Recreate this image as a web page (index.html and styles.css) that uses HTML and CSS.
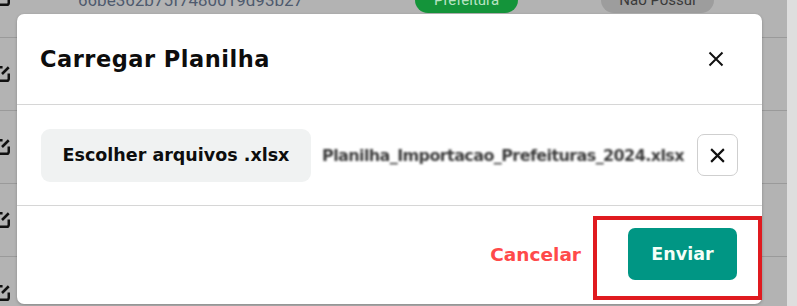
FILE: index.html
```html
<!DOCTYPE html>
<html lang="pt-BR">
<head>
<meta charset="utf-8">
<title>Carregar Planilha</title>
<link rel="stylesheet" href="styles.css">
</head>
<body>
<div class="page">
  <div class="table">
    <div class="row row-first">
      <span class="edit"><svg viewBox="0 0 16 16" width="18" height="18"><path d="M8.5 2H3.5A1.5 1.5 0 0 0 2 3.5v9A1.5 1.5 0 0 0 3.5 14h9a1.5 1.5 0 0 0 1.5-1.5V7.5" fill="none" stroke="#111" stroke-width="2.2"/><path d="M8 8l6-6" stroke="#111" stroke-width="2.2"/></svg></span>
      <span class="id">66be362b75f7480019d93b27</span>
      <span class="pill pill-green">Prefeitura</span>
      <span class="pill pill-gray">Não Possui</span>
    </div>
    <div class="row">
      <span class="edit"><svg viewBox="0 0 16 16" width="18" height="18"><path d="M8.5 2H3.5A1.5 1.5 0 0 0 2 3.5v9A1.5 1.5 0 0 0 3.5 14h9a1.5 1.5 0 0 0 1.5-1.5V7.5" fill="none" stroke="#111" stroke-width="2.2"/><path d="M8 8l6-6" stroke="#111" stroke-width="2.2"/></svg></span>
    </div>
    <div class="row">
      <span class="edit"><svg viewBox="0 0 16 16" width="18" height="18"><path d="M8.5 2H3.5A1.5 1.5 0 0 0 2 3.5v9A1.5 1.5 0 0 0 3.5 14h9a1.5 1.5 0 0 0 1.5-1.5V7.5" fill="none" stroke="#111" stroke-width="2.2"/><path d="M8 8l6-6" stroke="#111" stroke-width="2.2"/></svg></span>
    </div>
    <div class="row">
      <span class="edit"><svg viewBox="0 0 16 16" width="18" height="18"><path d="M8.5 2H3.5A1.5 1.5 0 0 0 2 3.5v9A1.5 1.5 0 0 0 3.5 14h9a1.5 1.5 0 0 0 1.5-1.5V7.5" fill="none" stroke="#111" stroke-width="2.2"/><path d="M8 8l6-6" stroke="#111" stroke-width="2.2"/></svg></span>
    </div>
    <div class="row">
      <span class="edit"><svg viewBox="0 0 16 16" width="18" height="18"><path d="M8.5 2H3.5A1.5 1.5 0 0 0 2 3.5v9A1.5 1.5 0 0 0 3.5 14h9a1.5 1.5 0 0 0 1.5-1.5V7.5" fill="none" stroke="#111" stroke-width="2.2"/><path d="M8 8l6-6" stroke="#111" stroke-width="2.2"/></svg></span>
    </div>
  </div>
  <div class="scroll-strip"></div>

  <div class="modal">
    <div class="modal-header">
      <h2 class="modal-title">Carregar Planilha</h2>
      <button class="close" aria-label="Fechar"><svg viewBox="0 0 16 16" width="16" height="16"><path d="M1.5 1.5l13 13M14.5 1.5l-13 13" stroke="#111" stroke-width="2"/></svg></button>
    </div>
    <div class="modal-body">
      <button class="choose">Escolher arquivos .xlsx</button>
      <span class="filename">Planilha_Importacao_Prefeituras_2024.xlsx</span>
      <button class="clear" aria-label="Remover"><svg viewBox="0 0 16 16" width="17" height="17"><path d="M2 2l12 12M14 2L2 14" stroke="#111" stroke-width="2"/></svg></button>
    </div>
    <div class="modal-footer">
      <button class="cancel">Cancelar</button>
      <button class="send">Enviar</button>
    </div>
  </div>
  <div class="highlight"></div>
</div>
</body>
</html>
```

FILE: styles.css
```css
* { box-sizing: border-box; }
html, body { margin: 0; padding: 0; }
body {
  width: 797px;
  height: 306px;
  overflow: hidden;
  background: #b3b3b3;
  font-family: "DejaVu Sans", "Noto Sans", sans-serif;
}
.page {
  position: relative;
  width: 797px;
  height: 306px;
  display: flex;
  overflow: hidden;
}
.table {
  width: 787px;
  height: 306px;
  display: flex;
  flex-direction: column;
  overflow: hidden;
}
.row {
  height: 73px;
  border-bottom: 1px solid #9a9a9a;
  display: flex;
  align-items: center;
  flex-shrink: 0;
}
.row-first {
  height: 38px;
  align-items: flex-end;
}
.edit {
  margin-left: -7px;
  display: flex;
  flex-shrink: 0;
}
.row-first .edit { margin-bottom: 30px; }
.id {
  flex-shrink: 0;
  width: 260px;
  font-family: Roboto, "Liberation Sans", sans-serif;
  font-size: 17px;
  color: #4e5a6e;
  margin-left: 67px;
  margin-bottom: 27px;
  line-height: 20px;
  white-space: nowrap;
}
.pill {
  flex-shrink: 0;
  font-family: Roboto, "Liberation Sans", sans-serif;
  font-size: 15px;
  line-height: 20px;
  padding: 3px 0;
  border-radius: 14px;
  margin-bottom: 24px;
  text-align: center;
}
.pill-green {
  background: #14943a;
  color: #b8e3c2;
  margin-left: 77px;
  width: 103px;
}
.pill-gray {
  background: #9d9d9d;
  color: #3a3a3a;
  margin-left: 83px;
  width: 113px;
}
.scroll-strip {
  width: 10px;
  flex-shrink: 0;
  background: #dedede;
}
.modal {
  position: absolute;
  left: 17px;
  top: 14px;
  width: 745px;
  height: 290px;
  background: #fff;
  border-radius: 7px;
  box-shadow: 0 1px 3px rgba(0,0,0,0.25);
  display: flex;
  flex-direction: column;
  overflow: hidden;
}
.modal-header {
  height: 91px;
  border-bottom: 1px solid #d6d6d6;
  display: flex;
  align-items: center;
  justify-content: space-between;
  padding: 0 38px 0 23px;
}
.modal-title {
  margin: 0;
  font-size: 22.5px;
  font-weight: bold;
  color: #0d0d0d;
  letter-spacing: 0.5px;
}
.close, .clear {
  background: none;
  border: none;
  padding: 0;
  display: flex;
  align-items: center;
  justify-content: center;
  cursor: pointer;
}
.close { width: 16px; height: 18px; }
.modal-body {
  height: 101px;
  border-bottom: 1px solid #d6d6d6;
  display: flex;
  align-items: center;
  padding: 0 24px;
}
.choose {
  width: 270px;
  height: 53px;
  background: #f0f2f2;
  border: none;
  border-radius: 9px;
  font-family: inherit;
  font-size: 17.5px;
  font-weight: bold;
  color: #0d0d0d;
  padding: 0;
}
.filename {
  margin-left: 11px;
  width: 366px;
  font-size: 16px;
  font-weight: bold;
  color: #3a3a3a;
  white-space: nowrap;
  overflow: hidden;
  filter: blur(0.8px);
  letter-spacing: -0.6px;
}
.clear {
  margin-left: auto;
  width: 41px;
  height: 42px;
  border: 1px solid #cfcfcf;
  border-radius: 7px;
  background: #fff;
}
.modal-footer {
  flex: 1;
  display: flex;
  align-items: center;
  justify-content: flex-end;
  padding: 0 25px 2px 0;
}
.cancel {
  background: none;
  border: none;
  font-family: inherit;
  font-size: 18.5px;
  font-weight: bold;
  color: #ff4a4a;
  padding: 0;
  margin-right: 47px;
}
.send {
  width: 109px;
  height: 52px;
  background: #009684;
  border: none;
  border-radius: 7px;
  font-family: inherit;
  font-size: 17.5px;
  font-weight: bold;
  color: #f4fff8;
}
.highlight {
  position: absolute;
  left: 593px;
  top: 216px;
  width: 169px;
  height: 84px;
  border: 4px solid #e01a1f;
}
```
